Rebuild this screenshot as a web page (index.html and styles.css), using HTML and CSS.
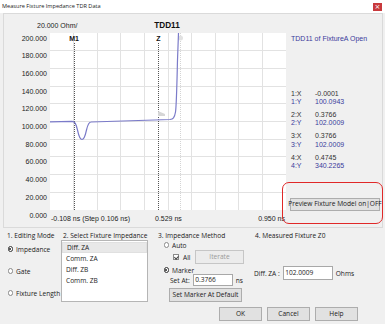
FILE: index.html
```html
<!DOCTYPE html>
<html>
<head>
<meta charset="utf-8">
<link rel="stylesheet" href="styles.css">
</head>
<body>
<div class="window">
  <div class="titlebar">
    <span class="title">Measure Fixture Impedance TDR Data</span>
    <span class="close">×</span>
  </div>

  <div class="chart-panel">
    <svg class="chart" width="283" height="214" viewBox="4 14 283 214">
      <rect x="50" y="33" width="236" height="177" fill="#ffffff"/>
      <g stroke="#e2e2e2" stroke-width="1">
        <line x1="50" y1="50.5" x2="286" y2="50.5"/>
        <line x1="50" y1="68.5" x2="286" y2="68.5"/>
        <line x1="50" y1="86.5" x2="286" y2="86.5"/>
        <line x1="50" y1="103.5" x2="286" y2="103.5"/>
        <line x1="50" y1="121.5" x2="286" y2="121.5"/>
        <line x1="50" y1="139.5" x2="286" y2="139.5"/>
        <line x1="50" y1="156.5" x2="286" y2="156.5"/>
        <line x1="50" y1="174.5" x2="286" y2="174.5"/>
        <line x1="50" y1="192.5" x2="286" y2="192.5"/>
        <line x1="73.5" y1="33" x2="73.5" y2="210"/>
        <line x1="97.5" y1="33" x2="97.5" y2="210"/>
        <line x1="120.5" y1="33" x2="120.5" y2="210"/>
        <line x1="144.5" y1="33" x2="144.5" y2="210"/>
        <line x1="168.5" y1="33" x2="168.5" y2="210"/>
        <line x1="191.5" y1="33" x2="191.5" y2="210"/>
        <line x1="215.5" y1="33" x2="215.5" y2="210"/>
        <line x1="238.5" y1="33" x2="238.5" y2="210"/>
        <line x1="262.5" y1="33" x2="262.5" y2="210"/>
      </g>
      <line x1="180.5" y1="33" x2="180.5" y2="210" stroke="#d4d4d4" stroke-dasharray="1 1"/>
      <line x1="74.5" y1="43" x2="74.5" y2="210" stroke="#555" stroke-dasharray="1 1"/>
      <line x1="158.5" y1="43" x2="158.5" y2="210" stroke="#555" stroke-dasharray="1 1"/>
      <polygon points="158,111 165,114 165,116 158,116" fill="#d6d6d6"/>
      <circle cx="180.5" cy="38" r="2.5" fill="#e2e2e2"/>
      <path d="M50,121.8 L72,121.3 C75,121.3 76,124 77.5,130 C79,137 80,139.5 82,139.5 C84,139.5 85,137 86.5,130 C88,123.5 89,122 91,122 L170,119.5 C173,119 174.5,118 175.5,112 C176.5,106 177,80 177.5,60 L178.5,33" fill="none" stroke="#7b7bc9" stroke-width="1.2"/>

      <g class="axis">
        <text x="47" y="40.5" text-anchor="end">200.000</text>
        <text x="47" y="58.2" text-anchor="end">180.000</text>
        <text x="47" y="75.9" text-anchor="end">160.000</text>
        <text x="47" y="93.6" text-anchor="end">140.000</text>
        <text x="47" y="111.3" text-anchor="end">120.000</text>
        <text x="47" y="129" text-anchor="end">100.000</text>
        <text x="47" y="146.7" text-anchor="end">80.000</text>
        <text x="47" y="164.4" text-anchor="end">60.000</text>
        <text x="47" y="182.1" text-anchor="end">40.000</text>
        <text x="47" y="199.8" text-anchor="end">20.000</text>
        <text x="47" y="217.5" text-anchor="end">0.000</text>
        <text x="37" y="27.5">20.000 Ohm/</text>
        <text x="51" y="220.5">-0.108 ns (Step 0.106 ns)</text>
        <text x="155" y="220.5">0.529 ns</text>
        <text x="285" y="220.5" text-anchor="end">0.950 ns</text>
      </g>
      <text class="heading" x="167" y="28" text-anchor="middle">TDD11</text>
      <text class="marker" x="74" y="40.5" text-anchor="middle">M1</text>
      <text class="marker" x="158.5" y="40.5" text-anchor="middle">Z</text>
    </svg>

    <div class="side">
      <div class="legend">TDD11 of FixtureA Open</div>
      <div class="cursors">
        <div class="cur"><span>1:X</span><span>-0.0001</span><span class="blue">1:Y</span><span class="blue">100.0943</span></div>
        <div class="cur"><span>2:X</span><span>0.3766</span><span class="blue">2:Y</span><span class="blue">102.0009</span></div>
        <div class="cur"><span>3:X</span><span>0.3766</span><span class="blue">3:Y</span><span class="blue">102.0009</span></div>
        <div class="cur"><span>4:X</span><span>0.4745</span><span class="blue">4:Y</span><span class="blue">340.2265</span></div>
      </div>
      <button class="btn preview">Preview Fixture Model on|OFF</button>
    </div>
    <div class="annot"></div>
  </div>

  <div class="controls">
    <div class="col col1">
      <div class="glabel">1. Editing Mode</div>
      <div class="opt first"><span class="radio on"></span>Impedance</div>
      <div class="opt"><span class="radio"></span>Gate</div>
      <div class="opt"><span class="radio"></span>Fixture Length</div>
    </div>
    <div class="col col2">
      <div class="glabel">2. Select Fixture Impedance</div>
      <div class="listbox">
        <div class="item sel">Diff. ZA</div>
        <div class="item">Comm. ZA</div>
        <div class="item">Diff. ZB</div>
        <div class="item">Comm. ZB</div>
      </div>
    </div>
    <div class="col col3">
      <div class="glabel">3. Impedance Method</div>
      <div class="opt3"><span class="radio"></span>Auto</div>
      <div class="allrow"><span class="check"></span><span class="alltxt">All</span><button class="btn iterate">Iterate</button></div>
      <div class="opt3 marker-row"><span class="radio on"></span>Marker</div>
      <div class="setrow"><span>Set At:</span><span class="input small">0.3766</span><span class="unit">ns</span></div>
      <button class="btn setdef">Set Marker At Default</button>
    </div>
    <div class="col col4">
      <div class="glabel">4. Measured Fixture Z0</div>
      <div class="zrow"><span>Diff. ZA :</span><span class="input wide">102.0009</span><span class="unit">Ohms</span></div>
    </div>
  </div>

  <div class="actions">
    <button class="btn act">OK</button>
    <button class="btn act">Cancel</button>
    <button class="btn act">Help</button>
  </div>
</div>
</body>
</html>
```

FILE: styles.css
```css
* { box-sizing: border-box; }
html, body { margin: 0; padding: 0; }
body {
  width: 385px;
  height: 324px;
  overflow: hidden;
  background: #f0f0f0;
  font-family: "Open Sans", "Noto Sans", sans-serif;
  font-size: 6.6px;
  color: #1a1a1a;
}
.window { width: 385px; height: 324px; }

.titlebar {
  height: 13px;
  background: #ffffff;
  display: flex;
  align-items: center;
  justify-content: space-between;
  padding: 0 3px 0 2px;
}
.title { font-size: 5.6px; color: #222; line-height: 13px; }
.close {
  width: 9px;
  height: 8px;
  background: #c8393c;
  color: #fff;
  font-size: 7px;
  line-height: 8px;
  text-align: center;
  font-family: "DejaVu Sans", sans-serif;
}

.chart-panel {
  position: relative;
  margin-left: 3px;
  width: 380px;
  height: 215px;
  border: 1px solid #dadada;
  display: flex;
}
.chart { display: block; flex: none; }
.chart text { font-family: "Liberation Sans", Arial, sans-serif; font-size: 7px; fill: #222; }
.chart .heading { font-size: 8.2px; font-weight: bold; fill: #111; }
.chart .marker { font-size: 7px; font-weight: bold; fill: #111; }

.side {
  flex: 1;
  padding-left: 4px;
  font-family: "Liberation Sans", Arial, sans-serif;
  font-size: 7px;
  color: #333;
}
.legend {
  margin-top: 20px;
  line-height: 9px;
  color: #3b3b9c;
}
.cursors {
  margin-top: 46.5px;
  display: flex;
  flex-direction: column;
  gap: 4.4px;
}
.cur {
  display: grid;
  grid-template-columns: 24px auto;
  line-height: 8.5px;
}
.cur .blue { color: #3b3b9c; }

.btn {
  font-family: "Open Sans", "Noto Sans", sans-serif;
  font-size: 6.6px;
  color: #1a1a1a;
  background: #e1e1e1;
  border: 1px solid #adadad;
  padding: 0;
  margin: 0;
  line-height: 1;
  display: flex;
  align-items: center;
  justify-content: center;
}
.preview {
  margin-top: 27px;
  margin-left: -1px;
  width: 90px;
  height: 13px;
  white-space: nowrap;
}
.annot {
  position: absolute;
  left: 278px;
  top: 168px;
  width: 101px;
  height: 42px;
  border: 1.5px solid #e02828;
  border-radius: 7px;
}

.controls {
  display: flex;
  height: 78px;
}
.col { display: flex; flex-direction: column; }
.glabel { line-height: 8px; padding-top: 4px; height: 12px; white-space: nowrap; }
.col1 { width: 63px; padding-left: 7px; }
.opt { display: flex; align-items: center; line-height: 9px; height: 9px; margin-top: 13px; white-space: nowrap; }
.opt.first { margin-top: 4.5px; }
.radio {
  width: 5.5px;
  height: 5.5px;
  border-radius: 50%;
  border: 1px solid #8a8a8a;
  background: #fff;
  margin-right: 3px;
  margin-left: 0.5px;
  display: inline-block;
  position: relative;
  flex: none;
}
.radio.on { border-color: #333; }
.radio.on::after {
  content: "";
  position: absolute;
  left: 0.75px; top: 0.75px;
  width: 2px; height: 2px;
  border-radius: 50%;
  background: #222;
}

.col2 { width: 95px; margin-left: -2px; }
.col2 .glabel { padding-left: 2px; }
.listbox {
  width: 87px;
  height: 62px;
  background: #fff;
  border: 1px solid #b5b5b5;
  padding-top: 0.5px;
}
.item { line-height: 11px; height: 11px; padding-left: 4px; }
.item.sel { background: #e8e8e8; border: 1px solid #e0e0e0; line-height: 9px; }

.col3 { width: 95px; padding-left: 2px; }
.opt3 { display: flex; align-items: center; height: 8px; margin-top: 1px; padding-left: 5px; }
.allrow { display: flex; align-items: center; height: 14px; margin-top: 1px; padding-left: 15px; }
.check {
  width: 6px; height: 6px;
  border: 1px solid #8a8a8a;
  background: #fff;
  position: relative;
  flex: none;
}
.check::after {
  content: "";
  position: absolute;
  left: 1.2px; top: 0px;
  width: 1.5px; height: 3px;
  border: solid #444;
  border-width: 0 1px 1px 0;
  transform: rotate(45deg);
}
.alltxt { margin-left: 4px; width: 12px; }
.iterate {
  width: 49px;
  height: 14px;
  color: #9a9a9a;
  background: #ececec;
  border-color: #c6c6c6;
}
.marker-row { margin-top: 2px; }
.setrow { display: flex; align-items: center; height: 12px; padding-left: 12px; }
.input {
  background: #fff;
  border: 1px solid #a8a8a8;
  height: 12px;
  line-height: 10px;
  padding-left: 1.5px;
}
.small { width: 40px; margin-left: 3px; }
.unit { margin-left: 3px; }
.setdef {
  margin-top: 2px;
  margin-left: 11px;
  width: 73px;
  height: 14px;
  white-space: nowrap;
}

.col4 { width: 125px; padding-left: 4px; }
.zrow { display: flex; align-items: center; margin-top: 26px; margin-left: -1px; height: 14px; }
.wide { width: 50px; height: 14px; line-height: 12px; margin-left: 3px; }

.actions {
  display: flex;
  justify-content: flex-end;
  gap: 5px;
  padding-right: 27px;
  margin-top: 1px;
}
.act { width: 43px; height: 14px; }
```
